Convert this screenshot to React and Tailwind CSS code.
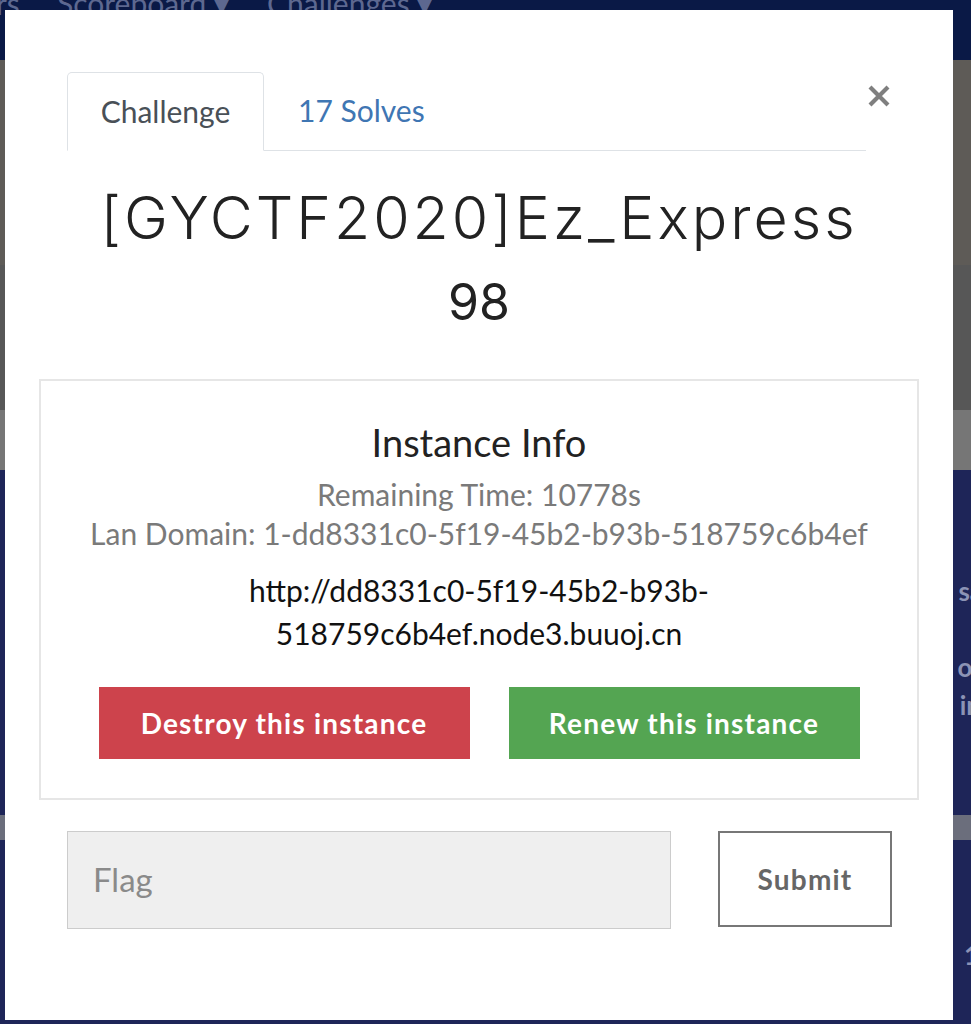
import React from "react";

export default function App() {
  return (
    <div className="relative w-[971px] h-[1024px] overflow-hidden bg-[#1c2356]" style={{ fontFamily: "Lato, 'Liberation Sans', sans-serif" }}>
      {/* dimmed page behind */}
      <div className="flex flex-col w-full">
        <div className="h-[60px] bg-[#0a1946] overflow-hidden">
          <div className="flex items-start -mt-[17px] text-[30px] leading-[40px] text-[#5d6890] whitespace-nowrap">
            <span className="-ml-[4px] w-[61px]">rs</span>
            <span className="w-[210px]">Scoreboard ▾</span>
            <span>Challenges ▾</span>
          </div>
        </div>
        <div className="h-[205px] bg-[#5e5b57]"></div>
        <div className="h-[145px] bg-[#575757]"></div>
        <div className="h-[60px] bg-[#767676]"></div>
        <div className="h-[345px] bg-[#1e2558] flex flex-col items-end text-[26px] font-bold text-[#8c93b5] leading-none">
          <span className="mt-[108px] -mr-[12px]">sa</span>
          <span className="mt-[50px] -mr-[8px]">ol</span>
          <span className="mt-[12px] -mr-[10px]">in</span>
        </div>
        <div className="h-[25px] bg-[#6b6e7c]"></div>
        <div className="h-[200px] bg-[#1e2558] flex flex-col items-end text-[26px] font-bold text-[#8c93b5] leading-none">
          <span className="mt-[102px] -mr-[8px]">1</span>
        </div>
      </div>

      {/* modal */}
      <div className="absolute left-[5px] top-[10px] w-[948px] h-[1010px] bg-white flex flex-col">
        {/* header */}
        <div className="flex items-start pt-[61px] pl-[62px]">
          <div className="flex items-end w-[799px] border-b border-[#dee2e6]">
            <div className="w-[197px] h-[79px] -mb-px border border-[#dee2e6] border-b-white rounded-t-[5px] bg-white flex items-center justify-center text-[30px] text-[#495057]">
              Challenge
            </div>
            <div className="h-[79px] px-[34px] flex items-center text-[30px] text-[#3f76b3]">17 Solves</div>
          </div>
          <button className="mt-[12px] w-[26px] h-[26px] flex items-center justify-center">
            <svg width="24" height="24" viewBox="0 0 24 24">
              <path d="M3 3 L21 21 M21 3 L3 21" stroke="#7f7f7f" strokeWidth="4.2" strokeLinecap="butt" />
            </svg>
          </button>
        </div>

        {/* title */}
        <div className="mt-[32px] text-center text-[59px] leading-[70px] text-[#222] tracking-[3px]" style={{ fontFamily: "Inter, 'Noto Sans', sans-serif", fontWeight: 300 }}>
          [GYCTF2020]Ez_Express
        </div>
        <div className="mt-[19px] text-center text-[50px] leading-[60px] text-[#222]" style={{ fontFamily: "Inter, 'Noto Sans', sans-serif", fontWeight: 400 }}>
          98
        </div>

        {/* instance box */}
        <div className="mx-[34px] mt-[47px] h-[421px] border-2 border-[#e6e6e6] flex flex-col items-center">
          <div className="mt-[39px] text-[38px] leading-[44px] text-[#222]">Instance Info</div>
          <div className="mt-[11px] text-[30px] leading-[39px] text-[#7a7a7a]">Remaining Time: 10778s</div>
          <div className="text-[30px] leading-[39px] text-[#7a7a7a] whitespace-nowrap">Lan Domain: 1-dd8331c0-5f19-45b2-b93b-518759c6b4ef</div>
          <div className="mt-[16px] text-center text-[30px] leading-[43px] text-[#111]">
            http://dd8331c0-5f19-45b2-b93b-<br />518759c6b4ef.node3.buuoj.cn
          </div>
          <div className="mt-[32px] flex gap-[39px]">
            <button className="w-[371px] h-[72px] bg-[#cd434c] text-white text-[28px] font-bold tracking-[1.2px]">Destroy this instance</button>
            <button className="w-[351px] h-[72px] bg-[#54a552] text-white text-[28px] font-bold tracking-[1.2px]">Renew this instance</button>
          </div>
        </div>

        {/* flag row */}
        <div className="flex items-start mt-[31px] pl-[62px]">
          <div className="w-[604px] h-[98px] bg-[#efefef] border border-[#cccccc] flex items-center pl-[25px] text-[33px] text-[#8a8a8a]">
            Flag
          </div>
          <button className="ml-[47px] w-[174px] h-[96px] border-2 border-[#777] bg-white text-[28px] font-bold text-[#666] tracking-[1.2px]">Submit</button>
        </div>
      </div>
    </div>
  );
}
